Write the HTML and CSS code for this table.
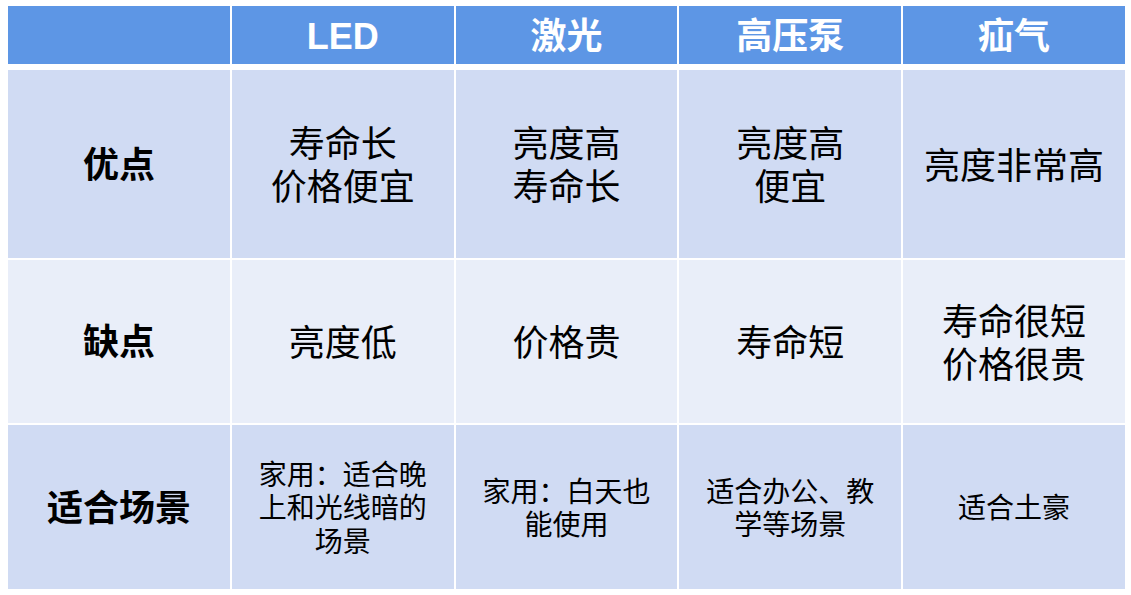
FILE: index.html
```html
<!DOCTYPE html>
<html lang="zh">
<head>
<meta charset="utf-8">
<link rel="stylesheet" href="styles.css">
</head>
<body>
<div class="table">
  <div class="cell head"></div>
  <div class="cell head latin">LED</div>
  <div class="cell head">激光</div>
  <div class="cell head">高压泵</div>
  <div class="cell head">疝气</div>

  <div class="cell dark rowhead">优点</div>
  <div class="cell dark">寿命长<br>价格便宜</div>
  <div class="cell dark">亮度高<br>寿命长</div>
  <div class="cell dark">亮度高<br>便宜</div>
  <div class="cell dark">亮度非常高</div>

  <div class="cell light rowhead">缺点</div>
  <div class="cell light">亮度低</div>
  <div class="cell light">价格贵</div>
  <div class="cell light">寿命短</div>
  <div class="cell light">寿命很短<br>价格很贵</div>

  <div class="cell dark rowhead">适合场景</div>
  <div class="cell dark small">家用：适合晚<br>上和光线暗的<br>场景</div>
  <div class="cell dark small">家用：白天也<br>能使用</div>
  <div class="cell dark small">适合办公、教<br>学等场景</div>
  <div class="cell dark small">适合土豪</div>
</div>
</body>
</html>
```

FILE: styles.css
```css
html, body {
  margin: 0;
  padding: 0;
  background: #ffffff;
}
body {
  padding: 6px 0 0 8px;
  font-family: "Liberation Sans", "Noto Sans CJK SC", sans-serif;
}
.table {
  width: 1117px;
  display: grid;
  grid-template-columns: repeat(5, 1fr);
  grid-template-rows: 62px 188px 163px 164px;
  gap: 2px;
}
.cell {
  display: flex;
  align-items: center;
  justify-content: center;
  text-align: center;
  font-size: 36px;
  line-height: 43px;
  color: #000000;
  box-sizing: border-box;
  padding-top: 4px;
}
.head {
  background: #5d96e5;
  color: #ffffff;
  font-weight: bold;
  margin-bottom: 4px;
  padding-top: 2px;
}
.dark {
  background: #d0dbf3;
}
.light {
  background: #e9eef9;
}
.rowhead {
  font-weight: bold;
  padding-top: 2px;
}
.small {
  font-size: 28px;
  line-height: 33.5px;
}
```
